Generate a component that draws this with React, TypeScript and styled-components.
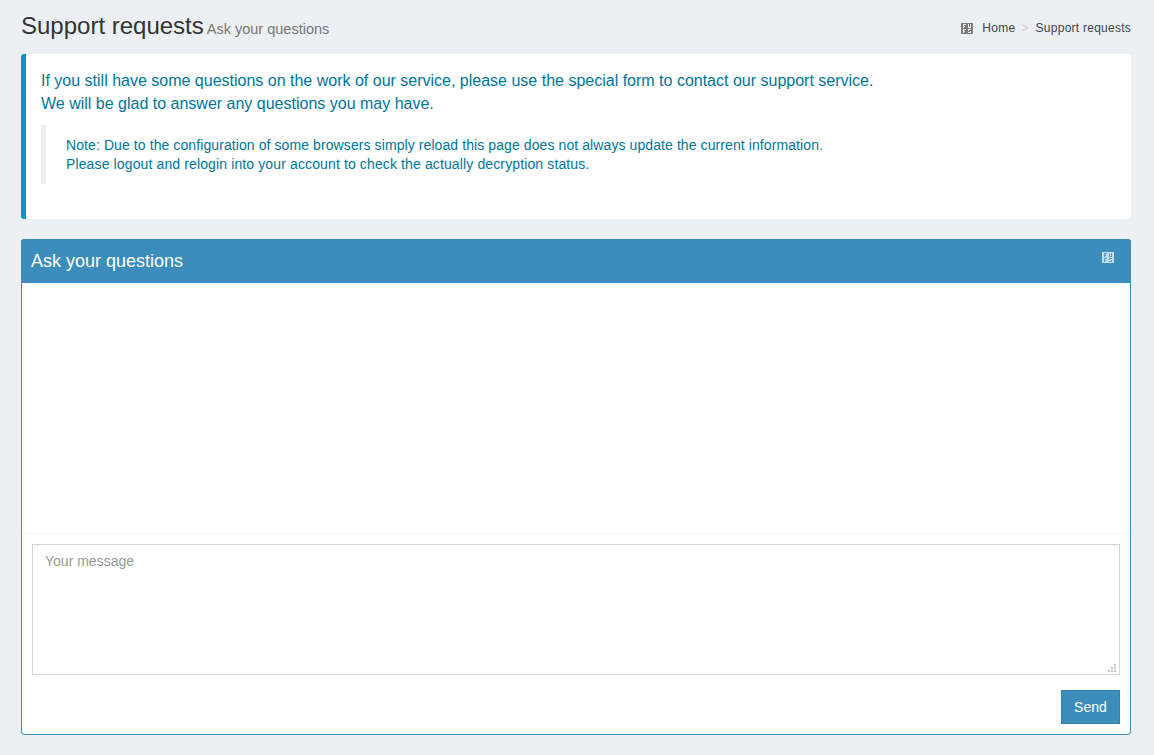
import React from "react";
import styled, { createGlobalStyle } from "styled-components";

const Global = createGlobalStyle`
  html, body { margin: 0; padding: 0; background: #ecf0f5; }
  body { font-family: "Liberation Sans", Arial, sans-serif; color: #333; }
  * { box-sizing: border-box; }
`;

const Page = styled.div`
  width: 1154px;
  height: 755px;
  overflow: hidden;
  padding: 13px 23px 0 21px;
`;

const Header = styled.header`
  display: flex;
  align-items: flex-start;
  justify-content: space-between;
  height: 41px;
`;

const Title = styled.h1`
  margin: 0;
  font-size: 24px;
  font-weight: 400;
  line-height: 26px;
  color: #333;
`;

const Subtitle = styled.small`
  font-size: 14.5px;
  font-weight: 300;
  color: #777;
  margin-left: 3px;
`;

const Crumbs = styled.ol`
  display: flex;
  align-items: center;
  list-style: none;
  margin: 8px 0 0;
  padding: 0;
  font-size: 12px;
  line-height: 15px;
  letter-spacing: 0.25px;
  color: #444;
`;

const Crumb = styled.li`
  display: flex;
  align-items: center;
  color: #444;
`;

const CrumbSep = styled.li`
  color: #ccc;
  padding: 0 7px 0 6px;
`;

const CrumbIcon = styled.svg`
  display: block;
  margin: -1px 9px 0 0;
`;

const Callout = styled.section`
  height: 165px;
  background: #fff;
  border-left: 5px solid #0097bc;
  border-radius: 3px;
  padding: 15px 30px 15px 15px;
  color: #00769b;
  margin-bottom: 20px;
`;

const Lead = styled.p`
  margin: 0 0 10px;
  font-size: 16px;
  line-height: 23px;
`;

const Note = styled.blockquote`
  margin: 0;
  height: 59px;
  padding: 11px 20px 0;
  border-left: 5px solid #eee;
  font-size: 14px;
  line-height: 19px;
`;

const NoteLine = styled.span<{ $tracking: number }>`
  display: block;
  letter-spacing: ${(p) => p.$tracking}px;
`;

const Box = styled.section`
  height: 496px;
  background: #fff;
  border: 1px solid #3c8dbc;
  border-radius: 3px;
  display: flex;
  flex-direction: column;
`;

const BoxHeader = styled.div`
  display: flex;
  justify-content: space-between;
  align-items: flex-start;
  height: 44px;
  margin: -1px -1px 0;
  padding: 10px 17px 0 10px;
  background: #3c8dbc;
  border-radius: 3px 3px 0 0;
  color: #fff;
`;

const BoxTitle = styled.h3`
  margin: 0;
  font-size: 18px;
  font-weight: 400;
  line-height: 24px;
`;

const ToolIcon = styled.svg`
  display: block;
  margin-top: 3px;
`;

const Messages = styled.div`
  height: 251px;
  border-bottom: 1px solid #f4f4f4;
`;

const Footer = styled.form`
  flex: 1;
  padding: 10px;
  display: flex;
  flex-direction: column;
  align-items: flex-end;
`;

const MessageField = styled.div`
  position: relative;
  width: 100%;
  height: 131px;
`;

const Message = styled.textarea`
  display: block;
  width: 100%;
  height: 100%;
  padding: 6px 12px;
  border: 1px solid #d2d6de;
  background: #fff;
  font-family: "Liberation Sans", Arial, sans-serif;
  font-size: 14px;
  line-height: 20px;
  color: #555;
  outline: none;
  resize: none;
  &::placeholder { color: #999; opacity: 1; }
`;

const Grip = styled.svg`
  position: absolute;
  right: 3px;
  bottom: 3px;
  display: block;
`;

const Send = styled.button`
  margin-top: 15px;
  width: 59px;
  height: 34px;
  background: #3c8dbc;
  border: 1px solid #367fa9;
  color: #fff;
  font-family: "Liberation Sans", Arial, sans-serif;
  font-size: 14px;
  letter-spacing: 0.05px;
  padding: 0;
`;

const Tofu = ({ as: Comp, box, ink }: { as: typeof CrumbIcon; box: string; ink: string }) => (
  <Comp width="12" height="11" viewBox="0 0 12 11" shapeRendering="crispEdges" aria-hidden="true">
    <rect width="12" height="11" fill={box} />
    <path d="M2 1h3v1H3v1h1v1H3v1H2zM7 1h1v3h1V1h1v4H7zM2 6h3v1H3v1h1v1H3v1H2zM7 6h3v1H8v1h2v2H7V9h2V8H7z" fill={ink} />
  </Comp>
);

export default function App() {
  return (
    <Page>
      <Global />
      <Header>
        <Title>
          Support requests<Subtitle>Ask your questions</Subtitle>
        </Title>
        <Crumbs>
          <Crumb>
            <Tofu as={CrumbIcon} box="#7a7a7a" ink="#ececec" />
            Home
          </Crumb>
          <CrumbSep>&gt;</CrumbSep>
          <Crumb>Support requests</Crumb>
        </Crumbs>
      </Header>

      <Callout>
        <Lead>
          If you still have some questions on the work of our service, please use the special form to contact our support service.
          <br />
          We will be glad to answer any questions you may have.
        </Lead>
        <Note>
          <NoteLine $tracking={0.09}>
            Note: Due to the configuration of some browsers simply reload this page does not always update the current information.
          </NoteLine>
          <NoteLine $tracking={0.125}>
            Please logout and relogin into your account to check the actually decryption status.
          </NoteLine>
        </Note>
      </Callout>

      <Box>
        <BoxHeader>
          <BoxTitle>Ask your questions</BoxTitle>
          <Tofu as={ToolIcon} box="#c4dcea" ink="#5a9fc8" />
        </BoxHeader>
        <Messages />
        <Footer onSubmit={(e) => e.preventDefault()}>
          <MessageField>
            <Message placeholder="Your message" />
            <Grip width="9" height="8" viewBox="0 0 9 8" shapeRendering="crispEdges" aria-hidden="true">
              <path d="M6 0h2v2H6zM3 3h2v2H3zM6 3h2v2H6zM0 6h2v2H0zM3 6h2v2H3zM6 6h2v2H6z" fill="#c4c4c4" />
            </Grip>
          </MessageField>
          <Send type="submit">Send</Send>
        </Footer>
      </Box>
    </Page>
  );
}
